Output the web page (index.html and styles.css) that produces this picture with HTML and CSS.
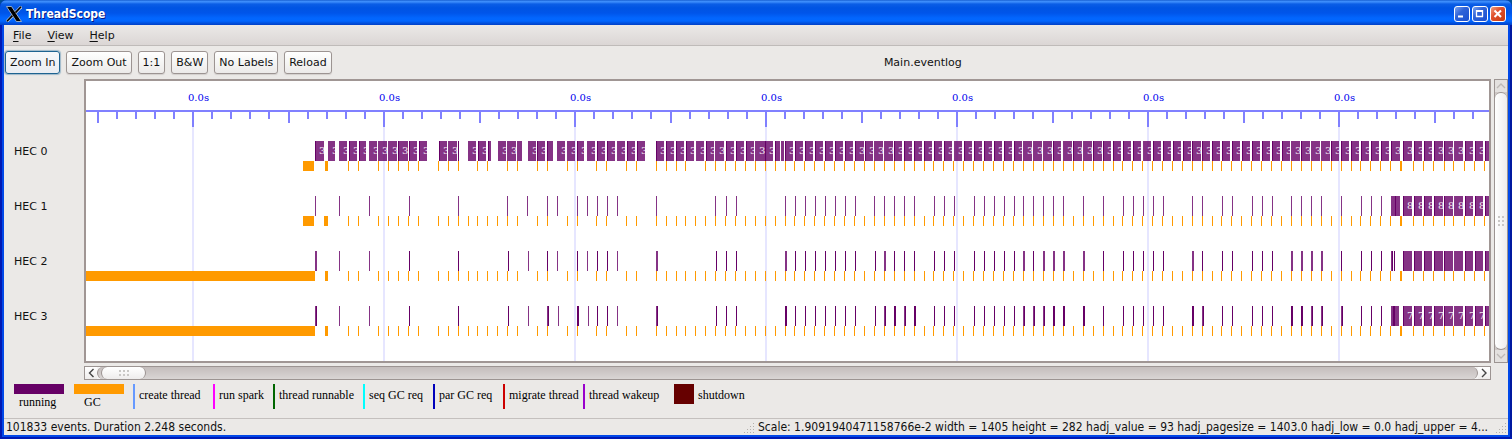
FILE: index.html
```html
<!DOCTYPE html>
<html lang="en">
<head>
<meta charset="utf-8">
<title>ThreadScope</title>
<link rel="stylesheet" href="styles.css">
</head>
<body>
<div class="window">
  <header class="titlebar">
    <svg class="app-icon" width="16" height="16" viewBox="0 0 16 16" aria-hidden="true">
      <path d="M15.500 .5 L.8 15.500" stroke="#b9c6d6" stroke-width="3"/>
      <path d="M.5 .5 H5.500 L15.500 15.500 H10.400 Z" fill="#000" stroke="#b9c6d6" stroke-width=".8"/>
      <path d="M15 .8 L9.500 6.600 M6.400 9.600 L1 15.200" stroke="#000" stroke-width="1.6"/>
    </svg>
    <h1 class="title">ThreadScope</h1>
    <div class="window-buttons">
      <button class="win-btn" type="button" aria-label="Minimize"><svg width="14" height="14" viewBox="0 0 14 14"><path d="M3 9.500h5" stroke="#fff" stroke-width="2"/></svg></button>
      <button class="win-btn" type="button" aria-label="Maximize"><svg width="14" height="14" viewBox="0 0 14 14"><path d="M3 4h7M3.500 3v7M9.500 3v7M3 9.500h7" stroke="#fff" stroke-width="1.300" fill="none"/><path d="M3 4h7" stroke="#fff" stroke-width="2"/></svg></button>
      <button class="win-btn win-close" type="button" aria-label="Close"><svg width="14" height="14" viewBox="0 0 14 14"><path d="M3.500 3.500l6.500 6.500M10 3.500l-6.500 6.500" stroke="#fff" stroke-width="2.100"/></svg></button>
    </div>
  </header>

  <div class="client">
    <nav class="menubar">
      <button class="menu" type="button"><u>F</u>ile</button>
      <button class="menu" type="button"><u>V</u>iew</button>
      <button class="menu" type="button"><u>H</u>elp</button>
    </nav>

    <div class="toolbar">
      <button class="tool tool-focus" type="button">Zoom In</button>
      <button class="tool" type="button">Zoom Out</button>
      <button class="tool" type="button">1:1</button>
      <button class="tool" type="button">B&amp;W</button>
      <button class="tool" type="button">No Labels</button>
      <button class="tool" type="button">Reload</button>
      <div class="filename">Main.eventlog</div>
    </div>

    <main class="view">
      <div class="hec-labels">
        <div class="hec">HEC 0</div>
        <div class="hec">HEC 1</div>
        <div class="hec">HEC 2</div>
        <div class="hec">HEC 3</div>
      </div>
      <div class="plot"><svg class="timeline" id="timeline" role="img" aria-label="Thread activity timeline"></svg></div>
      <div class="scroll scroll-v">
        <button class="step" type="button" aria-label="Scroll up"><svg width="12" height="12" viewBox="0 0 12 12"><path d="M2 8l4-4 4 4" stroke="#bdb9b6" stroke-width="1.3" fill="none"/></svg></button>
        <div class="thumb thumb-v"><svg width="8" height="12" viewBox="0 0 8 12" fill="#c9c7c5"><path d="M1 1h2v2H1zM5 1h2v2H5zM1 5h2v2H1zM5 5h2v2H5zM1 9h2v2H1zM5 9h2v2H5z"/></svg></div>
        <button class="step" type="button" aria-label="Scroll down"><svg width="12" height="12" viewBox="0 0 12 12"><path d="M2 4l4 4 4-4" stroke="#bdb9b6" stroke-width="1.3" fill="none"/></svg></button>
      </div>
      <div class="scroll scroll-h">
        <button class="step" type="button" aria-label="Scroll left"><svg width="12" height="12" viewBox="0 0 12 12"><path d="M8.500 2l-4 4 4 4" stroke="#444" stroke-width="1.4" fill="none"/></svg></button>
        <div class="trough"><div class="thumb thumb-h"><svg width="12" height="8" viewBox="0 0 12 8" fill="#c9c7c5"><path d="M1 1h2v2H1zM5 1h2v2H5zM9 1h2v2H9zM1 5h2v2H1zM5 5h2v2H5zM9 5h2v2H9z"/></svg></div></div>
        <button class="step" type="button" aria-label="Scroll right"><svg width="12" height="12" viewBox="0 0 12 12"><path d="M4 2l4 4-4 4" stroke="#444" stroke-width="1.4" fill="none"/></svg></button>
      </div>
    </main>

    <ul class="legend">
      <li class="key-bar"><span class="bar running"></span><span class="bar-label">running</span></li>
      <li class="key-bar"><span class="bar gc"></span><span class="bar-label bar-label-gc">GC</span></li>
      <li class="key-line create">create thread</li>
      <li class="key-line spark">run spark</li>
      <li class="key-line runnable">thread runnable</li>
      <li class="key-line seq">seq GC req</li>
      <li class="key-line par">par GC req</li>
      <li class="key-line migrate">migrate thread</li>
      <li class="key-line wakeup">thread wakeup</li>
      <li class="key-box"><span class="box"></span><span>shutdown</span></li>
    </ul>

    <footer class="statusbar">
      <div class="status"><span class="status-text">101833 events. Duration 2.248 seconds.</span><svg class="grip" width="12" height="12" viewBox="0 0 12 12"><path d="M10 1h1v1h-1zM10 4h1v1h-1zM7 4h1v1H7zM10 7h1v1h-1zM7 7h1v1H7zM4 7h1v1H4zM10 10h1v1h-1zM7 10h1v1H7zM4 10h1v1H4zM1 10h1v1H1z"/></svg></div>
      <div class="status"><span class="status-text">Scale: 1.9091940471158766e-2 width = 1405 height = 282 hadj_value = 93 hadj_pagesize = 1403.0 hadj_low = 0.0 hadj_upper = 4...</span><svg class="grip" width="12" height="12" viewBox="0 0 12 12"><path d="M10 1h1v1h-1zM10 4h1v1h-1zM7 4h1v1H7zM10 7h1v1h-1zM7 7h1v1H7zM4 7h1v1H4zM10 10h1v1h-1zM7 10h1v1H7zM4 10h1v1H4zM1 10h1v1H1z"/></svg></div>
    </footer>
  </div>
</div>
<script src="timeline.js"></script>
</body>
</html>
```
FILE: styles.css
```css
* { box-sizing: border-box; }

body {
  margin: 0;
  background: #004e98;
  font: 11px/15px "DejaVu Sans", sans-serif;
  color: #111;
}

button {
  margin: 0;
  padding: 0;
  border: 0;
  background: none;
  font: inherit;
  color: inherit;
}

svg { display: block; }

.window {
  display: flex;
  flex-direction: column;
  min-height: 100vh;
  padding: 0 4px 4px;
  border-radius: 7px 7px 0 0;
  background: #0148e8;
  box-shadow: inset 2px -2px #0019b4, inset -2px 0 #0019a0;
}

.titlebar {
  display: flex;
  align-items: center;
  gap: 4px;
  height: 25px;
  margin: 0 -4px;
  padding: 3px 6px 0;
  border-radius: 7px 7px 0 0;
  background: linear-gradient(#0a4fc4 0, #3f8ffb 1px, #3a8afa 2px, #0b5ee6 4px, #0054e3 8px, #0055ea 13px, #0266fe 18px, #0166ff 21px, #0152e0 23px, #0040c8 25px);
}

.title {
  flex: 1;
  margin: 0;
  font: bold 12px/16px "DejaVu Sans Condensed", "DejaVu Sans", sans-serif;
  color: #fff;
  text-shadow: 1px 1px #0a1883;
}

.window-buttons { display: flex; gap: 2px; }

.win-btn {
  width: 16px;
  height: 16px;
  border: 1px solid #fff;
  border-radius: 3px;
  background: linear-gradient(135deg, #7ba2ee, #2f63d8 40%, #1a4fd0);
}

.win-close { background: linear-gradient(135deg, #f0a080, #e0502c 40%, #c83c10); }

.client {
  display: flex;
  flex: 1;
  flex-direction: column;
  background: #ebe9e7;
}

.menubar {
  display: flex;
  gap: 16px;
  height: 21px;
  padding: 0 9px;
  border-bottom: 1px solid #bfbbb9;
  background: linear-gradient(#ebe9e7, #dbd6d5);
}

.menu u { text-underline-offset: 2px; }

.toolbar {
  display: flex;
  gap: 6px;
  padding: 5px 0 5px 1px;
}

.tool {
  height: 23px;
  padding: 0 4px;
  border: 1px solid #9c9492;
  border-radius: 3px;
  background: linear-gradient(#fff, #f5f5f4 50%, #eceae9);
  box-shadow: 0 1px 1px #d3cfcd;
}

.tool-focus {
  border-color: #1d6391;
  background: linear-gradient(#f6f8fb, #e9ecf1);
  box-shadow: 0 0 1px 1px #9eb9ca;
}

.filename {
  flex: 1;
  line-height: 23px;
  text-align: center;
}

.view {
  display: grid;
  grid-template-columns: 80px minmax(0, 1fr) 14px;
  row-gap: 3px;
}

.hec-labels { padding: 45px 0 0 10px; }

.hec { line-height: 55px; }

.plot {
  margin-right: 3px;
  border: 2px solid #a09694;
  background: #fff;
}

.timeline {
  width: 100%;
  height: 280px;
}

.tl-grid { fill: #e6e6ff; }
.tl-axis { fill: #8080ff; }
.tl-time { fill: #0000ee; font: 10px "DejaVu Serif", serif; }
.tl-run { fill: #660066; fill-opacity: .8; }
.tl-edge { fill: #660066; }
.tl-gc { fill: #ff9a00; }
.tl-id { fill: #f3e6f3; font: 10px "DejaVu Serif", serif; }

.scroll {
  display: flex;
  border: 1px solid #9c9492;
  background: #cfc9c7;
}

.scroll-v { flex-direction: column; }

.scroll-h {
  grid-column: 2;
  height: 14px;
  margin-right: 3px;
  background: #f6f5f5;
}

.step {
  display: flex;
  align-items: center;
  justify-content: center;
  width: 12px;
  height: 12px;
  background: linear-gradient(#fff, #efedec);
}

.scroll-v .step { background: #e4e1df; }

.trough {
  display: flex;
  flex: 1;
  padding-left: 3px;
  border: solid #9c9492;
  border-width: 0 1px;
  border-radius: 6px;
  background: linear-gradient(#c4bdbc, #d9d5d4);
}

.thumb {
  display: flex;
  align-items: center;
  justify-content: center;
}

.thumb-h {
  width: 45px;
  border: solid #9c9492;
  border-width: 0 1px;
  border-radius: 6px;
  background: linear-gradient(#fff, #eeecec);
}

.thumb-v {
  flex: 1;
  border: solid #9c9492;
  border-width: 1px 0;
  border-radius: 6px;
  background: linear-gradient(90deg, #fff, #eeecec);
}

.legend {
  display: grid;
  grid-template-columns: 60px 59px 80px 60px 90px 70px 70px 80px 91px auto;
  margin: 0;
  padding: 4px 10px 8px;
  list-style: none;
  font: 12px/16px "Liberation Serif", serif;
  color: #000;
}

.key-bar { display: flex; flex-direction: column; }
.bar { width: 50px; height: 10px; }
.bar-label { padding-left: 5px; }
.bar-label-gc { padding-left: 10px; }
.running { background: #660066; }
.gc { background: #ff9a00; }

.key-line {
  height: 25px;
  padding-left: 4px;
  border-left: 2px solid;
  line-height: 23px;
  white-space: nowrap;
}

.create { border-color: #6699ff; }
.spark { border-color: #ff00ff; }
.runnable { border-color: #006600; }
.seq { border-color: #00ffff; }
.par { border-color: #0000bb; }
.migrate { border-color: #cc0000; }
.wakeup { border-color: #9900cc; }

.key-box {
  display: flex;
  gap: 4px;
  line-height: 23px;
}

.box { width: 20px; height: 20px; background: #660000; }

.statusbar {
  display: flex;
  flex: 1;
  border-top: 1px solid #c4c0be;
  font: 12px/16px "DejaVu Sans Condensed", "DejaVu Sans", sans-serif;
}

.status {
  display: flex;
  flex: 1 1 0;
  align-items: flex-start;
  min-width: 0;
  padding: 0 1px 0 2px;
}

.status-text {
  flex: 1;
  overflow: hidden;
  white-space: nowrap;
}

.grip {
  flex: none;
  margin-top: 3px;
  fill: #b3afac;
}
```
FILE: timeline.js
```js
const SVG = "http://www.w3.org/2000/svg";
const root = document.getElementById("timeline");
const LEFT = 86;

function add(parent, name, attrs, text) {
  const el = document.createElementNS(SVG, name);
  for (const key in attrs) el.setAttribute(key, attrs[key]);
  if (text) el.textContent = text;
  parent.appendChild(el);
  return el;
}

function rect(cls, x, y, width, height) {
  add(root, "rect", { class: cls, x: x - LEFT, y, width, height });
}

// Grid lines and the time axis.
for (let i = 0; i < 7; i++) rect("tl-grid", 192 + 191 * i, 46, 2, 234);
rect("tl-axis", LEFT, 29, 1403, 2);
for (let k = -5; k <= 67; k++) {
  const height = k % 10 === 0 ? 15 : k % 5 === 0 ? 11 : 7;
  rect("tl-axis", Math.round(192.01 + 19.1 * k), 31, 2, height);
}
for (let i = 0; i < 7; i++) {
  add(root, "text", { class: "tl-time", x: 188 + 191 * i - LEFT, y: 20 }, "0.0s");
}

// Runs: start-end, "d" marks a solid leading edge.
const tail = "1403-1412d 1414-1422d 1424-1432d 1434-1443d 1444-1453d 1454-1463 1465-1473d 1475-1483d 1485-1489d";
const hec0 = "315-324d 328-335 339-347 349-357d 359-366d 369-377 378-387 388-397 398-408d 409-417d 419-427d " +
  "439-447d 448-457 458-459d 468-476 478-486d 488-491d 498-506 507-516 517-522 528-536 537-545d 547-553d " +
  "557-565 567-575 577-584d 587-595 597-605d 607-615d 617-625 627-635d 637-645d 656-664d 666-674d 676-684d " +
  "686-694d 696-704 706-714d 715-724 726-734d 736-744d 746-754d 755-765 765-773d 775-780d 781-784 " +
  "785-793d 795-803d 805-813d 815-823d 825-833d 835-843d 845-853d 855-864d 865-873d 874-883 884-893 " +
  "894-902d 904-912d 914-922d 924-932d 934-942d 944-952d 954-962 964-972d 974-982d 984-992d 994-1002d " +
  "1004-1012d 1014-1022d 1023-1032 1033-1042 1043-1052 1053-1061d 1063-1072 1073-1082d 1083-1092 " +
  "1093-1102d 1103-1111d 1113-1121d 1123-1131d 1133-1141d 1143-1151 1153-1161d 1163-1171d 1173-1181d " +
  "1183-1191d 1192-1201d 1202-1210d 1212-1220d 1222-1230d 1232-1240d 1242-1250d 1252-1260d 1262-1270d " +
  "1272-1280d 1282-1290d 1291-1300 1301-1310d 1311-1320 1321-1330 1331-1339d 1341-1349d 1351-1359d " +
  "1361-1369d 1371-1379d 1381-1389d 1391-1400d " + tail;

function drawRuns(list, top, id) {
  for (const item of list.split(" ")) {
    const [start, end] = item.split("-").map(v => parseInt(v, 10));
    const width = end - start;
    rect("tl-run", start, top, width, 20);
    if (item.endsWith("d")) rect("tl-edge", start, top, 1, 20);
    if (id && width > 6) {
      const clip = add(root, "svg", { x: start - LEFT, y: top, width, height: 20, overflow: "hidden" });
      add(clip, "text", { class: "tl-id", x: 4, y: 13 }, id);
    }
  }
}

// Slivers: "d" solid, "w" two wide, "m" light then solid, "b" two wide solid.
function drawSlivers(list, top) {
  for (const item of list.split(" ")) {
    const x = parseInt(item, 10);
    const kind = item.slice(-1);
    if (kind === "d") rect("tl-edge", x, top, 1, 20);
    else if (kind === "b") rect("tl-edge", x, top, 2, 20);
    else if (kind === "w") rect("tl-run", x, top, 2, 20);
    else {
      rect("tl-run", x, top, 1, 20);
      if (kind === "m") rect("tl-edge", x + 1, top, 1, 20);
    }
  }
}

const hec1 = "315 339 369 409 458 507 527 547 557 577 587 597 607 617 656 715 726 736 785 795 805 815 825 835 845 855 " +
  "874 884 894 904 914 934 944 954 974 984 994 1004 1014 1023 1033 1043 1053 1063 1083 1103 1123 1133 1143 1153 1163 " +
  "1192 1202 1222 1232 1252 1262 1272 1291 1301 1311 1321 1341 1361 1371 1381";
const hec2 = "315w 339 369 409d 458d 508d 528 547d 557 577d 587 597d 607d 617 656w 716d 726d 736d 785w 795d 805d 815d " +
  "825d 835d 845d 855d 875d 884w 894d 904d 914d 934d 944d 954d 974d 984d 994d 1004d 1014d 1023w 1033d 1043w 1053w " +
  "1063w 1083w 1103d 1123d 1133d 1143d 1153d 1163d 1192w 1202d 1222d 1232d 1252d 1262d 1272d 1291w 1301w 1311w 1321w " +
  "1341d 1361d 1371d 1381d 1391m 1394d";
const hec3 = "315m 339 369 409d 458d 508d 528 547m 558 577b 588 597d 607d 617 656m 716d 726d 736d 785b 795d 805d 815d " +
  "825d 835d 845d 855d 875d 884m 894b 904m 914b 934d 944d 954d 974d 984d 994d 1004d 1014d 1023m 1033m 1043m 1053b " +
  "1063b 1083b 1103d 1123d 1133d 1143d 1153d 1163d 1192b 1202m 1222d 1232d 1252d 1262d 1272d 1291b 1301b 1311m 1321m " +
  "1341m 1361d 1371d 1381d";

drawRuns(hec0, 60, "3");
drawSlivers(hec1, 115);
drawRuns("1391-1400", 115, "");
rect("tl-edge", 1395, 115, 1, 20);
drawRuns(tail, 115, "8");
drawSlivers(hec2, 170);
drawRuns(tail, 170, "");
drawSlivers(hec3, 225);
drawRuns("1391-1399", 225, "");
rect("tl-edge", 1393, 225, 2, 20);
drawRuns(tail, 225, "7");

// Garbage collections, drawn under each run track.
const gcShared = [348, 358, 378, 388, 398, 408, 418, 438, 448, 458, 477, 487, 507, 517, 537, 547, 567, 577, 596, 606,
  626, 636, 656, 666, 676, 685, 705, 715, 725, 735, 745, 755, 765, 775, 785, 794, 804, 814, 824, 834, 844, 854, 864,
  874, 884, 894, 904, 914, 924, 933, 943, 953, 963, 973, 983, 993, 1003, 1013, 1023, 1033, 1043, 1053, 1063, 1073,
  1083, 1093, 1103, 1113, 1122, 1132, 1142, 1152, 1162, 1172, 1182, 1192, 1202, 1212, 1221, 1231, 1241, 1251, 1261,
  1271, 1281, 1291, 1301, 1311, 1321, 1331, 1341, 1351, 1360, 1370, 1380, 1390, 1413, 1423, 1433, 1444, 1453, 1464,
  1474, 1484];
const gcOthers = [468, 497, 695];
for (let row = 0; row < 4; row++) {
  const top = 80 + 55 * row;
  if (row < 2) rect("tl-gc", 303, top, 11, 10);
  else rect("tl-gc", LEFT, top, 229, 10);
  rect("tl-gc", row === 1 ? 324 : 325, top, row === 1 ? 4 : 3, 10);
  rect("tl-gc", 1400, top, 2, 10);
  for (const x of row === 0 ? gcShared : gcShared.concat(gcOthers)) rect("tl-gc", x, top, 1, 10);
}
```
